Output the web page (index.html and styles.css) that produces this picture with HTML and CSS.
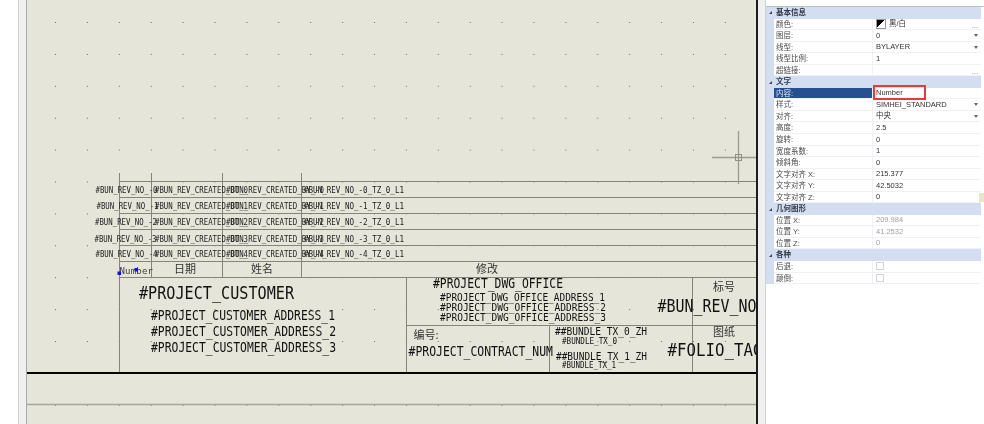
FILE: index.html
```html
<!DOCTYPE html>
<html lang="zh-CN">
<head>
    <meta charset="UTF-8">
    <title>特性</title>
    <link rel="stylesheet" href="styles.css">
</head>
<body>
    <div class="app">
        <div class="gutter"></div>
        <div class="strip strip-left"></div>
        <div class="canvas">
            <svg class="drawing" width="729" height="424" viewBox="27 0 729 424">
                <defs>
                    <pattern id="grid" x="55" y="22" width="31.9" height="31.9" patternUnits="userSpaceOnUse">
                        <rect width="1" height="1" class="dot"></rect>
                    </pattern>
                </defs>
                <rect x="27" y="0" width="729" height="424" fill="url(#grid)"></rect>

                <!-- 表格线 -->
                <g class="line">
                    <path d="M119 181.5H756M119 197.5H756M119 213.5H756M119 229.5H756M119 245.5H756M119 261.5H756M119 277.5H756"></path>
                    <path d="M119.5 173V372M151.5 173V277M222.5 173V277M301.5 173V277"></path>
                    <path d="M406.5 277V372M406 325.5H756M549.5 325V372M692.5 277V372"></path>
                </g>
                <path class="edge" d="M27 373H756"></path>
                <path class="far-line" d="M27 404.5H756"></path>

                <!-- 修订行 -->
                <g class="txt rev">
                    <text x="95.5" y="193.3" textLength="62" lengthAdjust="spacingAndGlyphs">#BUN_REV_NO_-0</text>
                    <text x="155" y="193.3" textLength="93" lengthAdjust="spacingAndGlyphs">#BUN_REV_CREATED_DT_0</text>
                    <text x="226" y="193.3" textLength="98" lengthAdjust="spacingAndGlyphs">#BUN_REV_CREATED_BY_-0</text>
                    <text x="304" y="193.3" textLength="100" lengthAdjust="spacingAndGlyphs">#BUN_REV_NO_-0_TZ_0_L1</text>

                    <text x="96.5" y="209.3" textLength="62" lengthAdjust="spacingAndGlyphs">#BUN_REV_NO_-1</text>
                    <text x="155" y="209.3" textLength="93" lengthAdjust="spacingAndGlyphs">#BUN_REV_CREATED_DT_1</text>
                    <text x="226" y="209.3" textLength="98" lengthAdjust="spacingAndGlyphs">#BUN_REV_CREATED_BY_-1</text>
                    <text x="304" y="209.3" textLength="100" lengthAdjust="spacingAndGlyphs">#BUN_REV_NO_-1_TZ_0_L1</text>

                    <text x="95" y="225.3" textLength="62" lengthAdjust="spacingAndGlyphs">#BUN_REV_NO_-2</text>
                    <text x="155" y="225.3" textLength="93" lengthAdjust="spacingAndGlyphs">#BUN_REV_CREATED_DT_2</text>
                    <text x="226" y="225.3" textLength="98" lengthAdjust="spacingAndGlyphs">#BUN_REV_CREATED_BY_-2</text>
                    <text x="304" y="225.3" textLength="100" lengthAdjust="spacingAndGlyphs">#BUN_REV_NO_-2_TZ_0_L1</text>

                    <text x="94.5" y="241.8" textLength="62" lengthAdjust="spacingAndGlyphs">#BUN_REV_NO_-3</text>
                    <text x="155" y="241.8" textLength="93" lengthAdjust="spacingAndGlyphs">#BUN_REV_CREATED_DT_3</text>
                    <text x="226" y="241.8" textLength="98" lengthAdjust="spacingAndGlyphs">#BUN_REV_CREATED_BY_-3</text>
                    <text x="304" y="241.8" textLength="100" lengthAdjust="spacingAndGlyphs">#BUN_REV_NO_-3_TZ_0_L1</text>

                    <text x="95.5" y="256.8" textLength="62" lengthAdjust="spacingAndGlyphs">#BUN_REV_NO_-4</text>
                    <text x="155" y="256.8" textLength="93" lengthAdjust="spacingAndGlyphs">#BUN_REV_CREATED_DT_4</text>
                    <text x="226" y="256.8" textLength="98" lengthAdjust="spacingAndGlyphs">#BUN_REV_CREATED_BY_-4</text>
                    <text x="304" y="256.8" textLength="100" lengthAdjust="spacingAndGlyphs">#BUN_REV_NO_-4_TZ_0_L1</text>
                </g>

                <!-- 表头 -->
                <g class="txt">
                    <text class="number" x="119.5" y="273.5" textLength="33.5" lengthAdjust="spacing">Number</text>
                    <text class="cjk" x="174" y="273">日期</text>
                    <text class="cjk" x="251" y="273">姓名</text>
                    <text class="cjk" x="476" y="273">修改</text>
                    <text class="cjk" x="713" y="291">标号</text>
                    <text class="cjk" x="713" y="336">图纸</text>
                    <text class="cjk" x="413.5" y="339">编号:</text>

                    <text class="t17" x="139" y="299.2" textLength="155" lengthAdjust="spacingAndGlyphs">#PROJECT_CUSTOMER</text>
                    <text class="t13" x="151" y="319.5" textLength="184" lengthAdjust="spacingAndGlyphs">#PROJECT_CUSTOMER_ADDRESS_1</text>
                    <text class="t13" x="151" y="335.7" textLength="185" lengthAdjust="spacingAndGlyphs">#PROJECT_CUSTOMER_ADDRESS_2</text>
                    <text class="t13" x="151" y="351.5" textLength="185" lengthAdjust="spacingAndGlyphs">#PROJECT_CUSTOMER_ADDRESS_3</text>

                    <text class="t13" x="433" y="288.4" textLength="130" lengthAdjust="spacingAndGlyphs">#PROJECT_DWG_OFFICE</text>
                    <text class="t10" x="440" y="300.8" textLength="165" lengthAdjust="spacingAndGlyphs">#PROJECT_DWG_OFFICE_ADDRESS_1</text>
                    <text class="t10" x="440" y="311.3" textLength="166" lengthAdjust="spacingAndGlyphs">#PROJECT_DWG_OFFICE_ADDRESS_2</text>
                    <text class="t10" x="440" y="321.3" textLength="166" lengthAdjust="spacingAndGlyphs">#PROJECT_DWG_OFFICE_ADDRESS_3</text>

                    <text class="t17" x="657.5" y="312" textLength="99" lengthAdjust="spacingAndGlyphs">#BUN_REV_NO</text>
                    <text class="t17" x="667.5" y="356" textLength="95" lengthAdjust="spacingAndGlyphs">#FOLIO_TAG</text>
                    <text class="t13" x="408.5" y="355.5" textLength="144.5" lengthAdjust="spacingAndGlyphs">#PROJECT_CONTRACT_NUM</text>

                    <text class="t10" x="555" y="334.8" textLength="92" lengthAdjust="spacingAndGlyphs">##BUNDLE_TX_0_ZH</text>
                    <text class="t9" x="562" y="344.3" textLength="55" lengthAdjust="spacingAndGlyphs">#BUNDLE_TX_0</text>
                    <text class="t10" x="556" y="359.8" textLength="91" lengthAdjust="spacingAndGlyphs">##BUNDLE_TX_1_ZH</text>
                    <text class="t9" x="562" y="368.3" textLength="54" lengthAdjust="spacingAndGlyphs">#BUNDLE_TX_1</text>
                </g>

                <!-- 夹点 -->
                <rect class="grip" x="117.5" y="271.5" width="3.5" height="3.5"></rect>
                <rect class="grip" x="134.5" y="268" width="3.5" height="3.5"></rect>

                <!-- 十字光标 -->
                <g class="cursor">
                    <path d="M738.5 131V184M712 157.5H757"></path>
                    <rect x="735.5" y="154.5" width="6" height="6"></rect>
                </g>
            </svg>
        </div>
        <div class="strip"></div>

        <div class="panel">
            <div class="panel-top"></div>
            <div class="rows">
                <div class="group"><i class="tri"></i>基本信息</div>
                <div class="row"><span class="key">颜色:</span><span class="val"><i class="swatch"></i>黑/白<b class="dots">...</b></span></div>
                <div class="row"><span class="key">图层:</span><span class="val">0<i class="arrow"></i></span></div>
                <div class="row"><span class="key">线型:</span><span class="val">BYLAYER<i class="arrow"></i></span></div>
                <div class="row"><span class="key">线型比例:</span><span class="val">1</span></div>
                <div class="row"><span class="key">超链接:</span><span class="val"><b class="dots">...</b></span></div>

                <div class="group"><i class="tri"></i>文字</div>
                <div class="row row-on"><span class="key">内容:</span><span class="val">Number</span></div>
                <div class="row"><span class="key">样式:</span><span class="val">SIMHEI_STANDARD<i class="arrow"></i></span></div>
                <div class="row"><span class="key">对齐:</span><span class="val">中央<i class="arrow"></i></span></div>
                <div class="row"><span class="key">高度:</span><span class="val">2.5</span></div>
                <div class="row"><span class="key">旋转:</span><span class="val">0</span></div>
                <div class="row"><span class="key">宽度系数:</span><span class="val">1</span></div>
                <div class="row"><span class="key">倾斜角:</span><span class="val">0</span></div>
                <div class="row"><span class="key">文字对齐 X:</span><span class="val">215.377</span></div>
                <div class="row"><span class="key">文字对齐 Y:</span><span class="val">42.5032</span></div>
                <div class="row"><span class="key">文字对齐 Z:</span><span class="val">0</span></div>

                <div class="group"><i class="tri"></i>几何图形</div>
                <div class="row row-off"><span class="key">位置 X:</span><span class="val">209.984</span></div>
                <div class="row row-off"><span class="key">位置 Y:</span><span class="val">41.2532</span></div>
                <div class="row row-off"><span class="key">位置 Z:</span><span class="val">0</span></div>

                <div class="group"><i class="tri"></i>各种</div>
                <div class="row"><span class="key">后退:</span><span class="val"><i class="check"></i></span></div>
                <div class="row"><span class="key">颠倒:</span><span class="val"><i class="check"></i></span></div>
            </div>
            <div class="redbox"></div>
            <div class="float-tab"></div>
        </div>
    </div>
</body>
</html>
```

FILE: styles.css
```css
* {
    padding: 0;
    margin: 0;
    box-sizing: border-box;
}
html, body {
    width: 984px;
    height: 424px;
    overflow: hidden;
    background: #fff;
}
.app {
    display: flex;
    height: 424px;
}
.gutter {
    width: 18px;
    background: #fff;
}
.strip {
    width: 7px;
    background: #f0f0f0;
}
.strip-left {
    width: 8px;
    border-left: 1px solid #cfcfcf;
}

/* 图纸 */
.canvas {
    width: 732px;
    background: #e5e5d9;
    border-left: 1px solid #a9a9a4;
    border-right: 2px solid #1c1c1c;
}
.drawing {
    display: block;
}
.dot {
    fill: #6f6f64;
}
.line path {
    fill: none;
    stroke: #85857a;
    stroke-width: 1;
}
.edge {
    fill: none;
    stroke: #000;
    stroke-width: 2.2;
}
.far-line {
    fill: none;
    stroke: #a6a699;
    stroke-width: 1.4;
}
.txt {
    font-family: "DejaVu Sans Mono", "Noto Sans CJK SC", monospace;
    fill: #111;
    filter: blur(0.3px);
}
.rev {
    font-size: 9px;
    fill: #222;
}
.number {
    font-size: 9px;
    fill: #3c3c3c;
}
.cjk {
    font-family: "Noto Sans CJK SC", sans-serif;
    font-size: 11px;
    fill: #333;
}
.t9 {
    font-size: 9px;
}
.t10 {
    font-size: 10.5px;
}
.t13 {
    font-size: 13.5px;
}
.t17 {
    font-size: 17px;
}
.grip {
    fill: #1010f0;
}
.cursor path {
    fill: none;
    stroke: #9c9c92;
    stroke-width: 1.3;
}
.cursor rect {
    fill: none;
    stroke: #8f8f86;
    stroke-width: 1;
}

/* 特性面板 */
.panel {
    position: relative;
    width: 219px;
    background: #fff;
    border-left: 1px solid #c4d3ea;
    font-family: "Liberation Sans", "Noto Sans CJK SC", sans-serif;
    font-size: 7.5px;
    color: #4a4a4a;
}
.panel-top {
    height: 7px;
    border-bottom: 1px solid #b9bfc8;
}
.rows {
    width: 215px;
    filter: blur(0.2px);
}
.group,
.row {
    height: 11.55px;
    line-height: 11.55px;
    display: flex;
    white-space: nowrap;
}
.group {
    background: #d3dff0;
    color: #333a48;
    font-weight: bold;
    padding-left: 3px;
    align-items: center;
    gap: 3px;
}
.tri {
    width: 0;
    height: 0;
    border-left: 3px solid transparent;
    border-bottom: 3px solid #3c4350;
    margin-right: 1px;
}
.row {
    background: #fff;
    border-left: 8px solid #d3dff0;
}
.key {
    width: 99px;
    padding-left: 2px;
    border-right: 1px solid #eef1f6;
    border-bottom: 1px solid #eef1f6;
}
.val {
    flex: 1;
    position: relative;
    padding-left: 3px;
    color: #333;
    border-bottom: 1px solid #eef1f6;
    display: flex;
    align-items: center;
}
.row-on .key {
    background: #26508f;
    color: #dbe5f3;
}
.row-off .val {
    color: #a0a0a0;
}
.arrow {
    position: absolute;
    right: 3px;
    top: 4px;
    width: 0;
    height: 0;
    border-left: 2.5px solid transparent;
    border-right: 2.5px solid transparent;
    border-top: 3px solid #666;
}
.dots {
    position: absolute;
    right: 3px;
    top: 1px;
    font-weight: normal;
    color: #777;
}
.swatch {
    width: 10px;
    height: 10px;
    margin-right: 3px;
    border: 1px solid #999;
    background: linear-gradient(135deg, #000 50%, #fff 50%);
}
.check {
    width: 8px;
    height: 8px;
    border: 1px solid #d4d4d4;
}
.redbox {
    position: absolute;
    left: 107px;
    top: 85px;
    width: 53px;
    height: 15px;
    border: 2px solid #e23c3c;
}
.float-tab {
    position: absolute;
    right: 0;
    top: 193px;
    width: 5px;
    height: 9px;
    background: linear-gradient(#dfe8d0, #eee7b8);
}
```
